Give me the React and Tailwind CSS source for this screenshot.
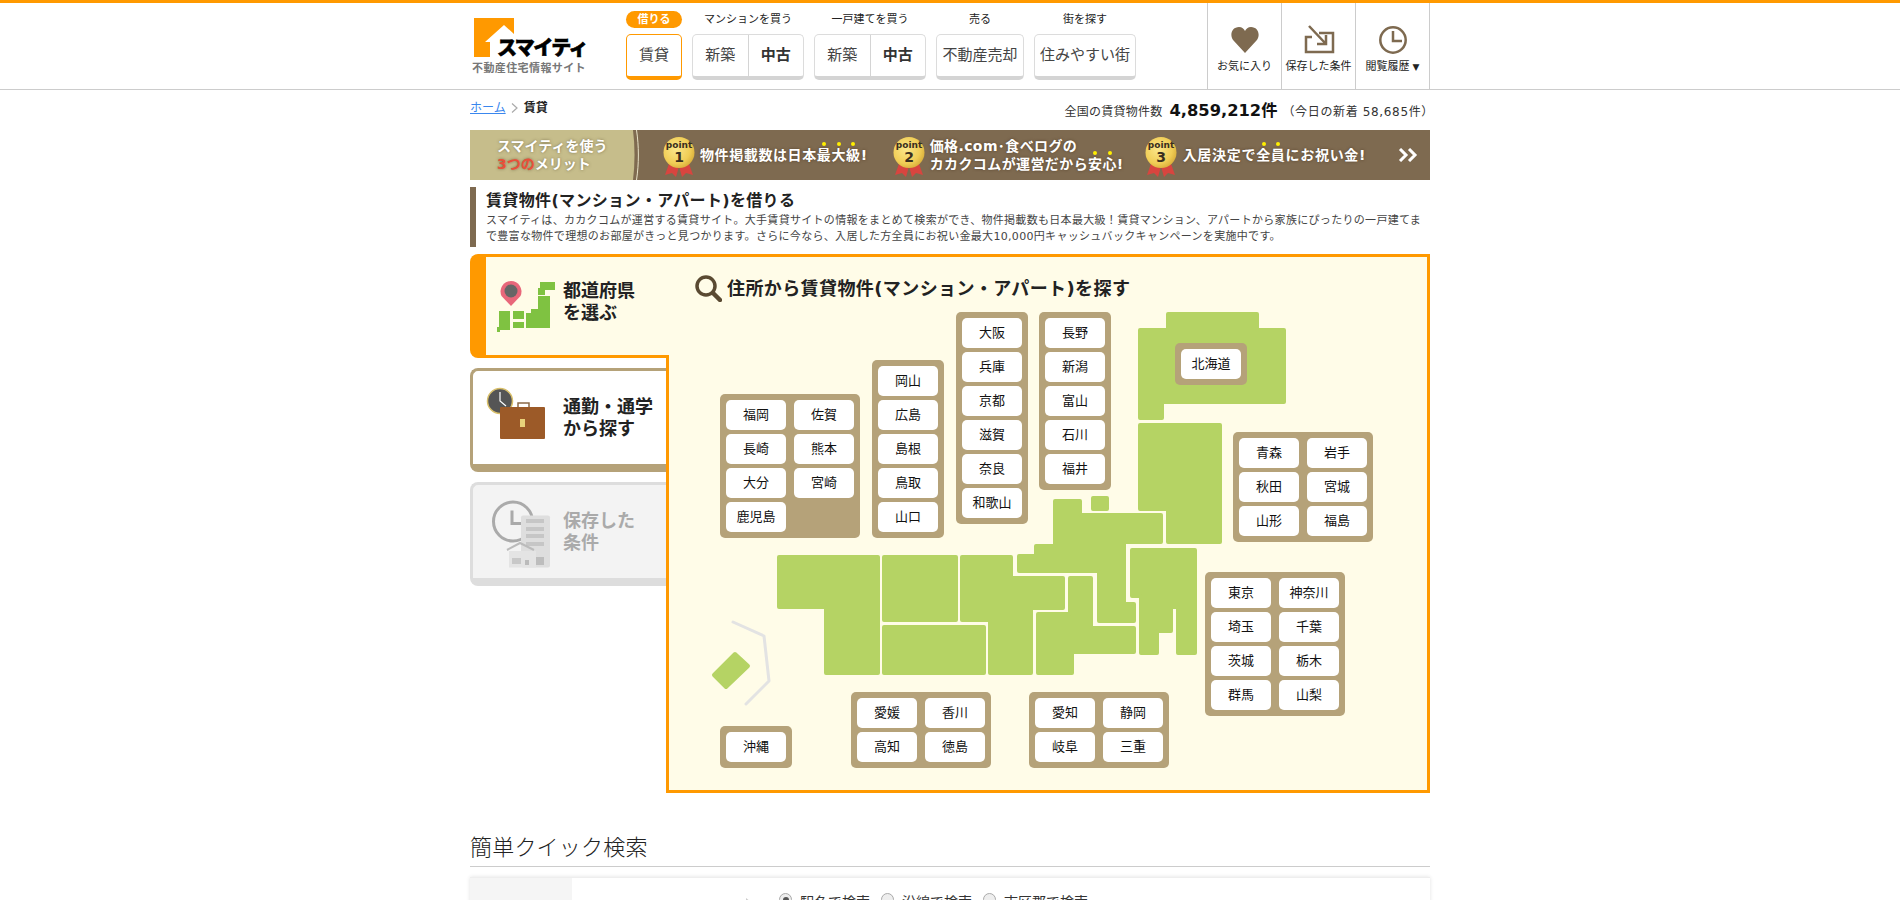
import React from "react";

function inset(pts, r = 2) {
  const n = pts.length;
  return pts
    .map((p, i) => {
      const a = pts[(i + n - 1) % n];
      const b = pts[(i + 1) % n];
      const d1 = [Math.sign(p[0] - a[0]), Math.sign(p[1] - a[1])];
      const d2 = [Math.sign(b[0] - p[0]), Math.sign(b[1] - p[1])];
      return `${p[0] + r * (-d1[1] - d2[1])},${p[1] + r * (d1[0] + d2[0])}`;
    })
    .join(" ");
}

const SHAPES = [
  [[1166,312],[1259,312],[1259,328],[1286,328],[1286,404],[1164,404],[1164,420],[1138,420],[1138,328],[1166,328]],
  [[1138,423],[1222,423],[1222,544],[1166,544],[1166,511],[1138,511]],
  [[1091,496],[1109,496],[1109,511],[1091,511]],
  [[1053,499],[1082,499],[1082,513],[1163,513],[1163,544],[1126,544],[1126,602],[1136,602],[1136,623],[1097,623],[1097,573],[1017,573],[1017,554],[1034,554],[1034,544],[1053,544]],
  [[1130,548],[1197,548],[1197,655],[1176,655],[1176,609],[1173,609],[1173,633],[1159,633],[1159,655],[1139,655],[1139,598],[1130,598]],
  [[1036,612],[1068,612],[1068,576],[1093,576],[1093,626],[1136,626],[1136,654],[1074,654],[1074,675],[1036,675]],
  [[960,555],[1013,555],[1013,576],[1065,576],[1065,610],[1033,610],[1033,675],[988,675],[988,622],[960,622]],
  [[882,555],[958,555],[958,622],[882,622]],
  [[882,625],[986,625],[986,675],[882,675]],
  [[777,555],[880,555],[880,675],[824,675],[824,609],[777,609]],
];

const GROUPS = [
  { pos: "left-[51px] top-[137px]", cols: "grid-cols-[60px_60px]", items: ["福岡","佐賀","長崎","熊本","大分","宮崎","鹿児島"] },
  { pos: "left-[203px] top-[103px]", cols: "grid-cols-[60px]", items: ["岡山","広島","島根","鳥取","山口"] },
  { pos: "left-[287px] top-[55px]", cols: "grid-cols-[60px]", items: ["大阪","兵庫","京都","滋賀","奈良","和歌山"] },
  { pos: "left-[370px] top-[55px]", cols: "grid-cols-[60px]", items: ["長野","新潟","富山","石川","福井"] },
  { pos: "left-[506px] top-[86px]", cols: "grid-cols-[60px]", items: ["北海道"] },
  { pos: "left-[564px] top-[175px]", cols: "grid-cols-[60px_60px]", items: ["青森","岩手","秋田","宮城","山形","福島"] },
  { pos: "left-[536px] top-[315px]", cols: "grid-cols-[60px_60px]", items: ["東京","神奈川","埼玉","千葉","茨城","栃木","群馬","山梨"] },
  { pos: "left-[51px] top-[469px]", cols: "grid-cols-[60px]", items: ["沖縄"] },
  { pos: "left-[182px] top-[435px]", cols: "grid-cols-[60px_60px]", items: ["愛媛","香川","高知","徳島"] },
  { pos: "left-[360px] top-[435px]", cols: "grid-cols-[60px_60px]", items: ["愛知","静岡","岐阜","三重"] },
];

function Logo() {
  return (
    <div className="w-[156px] shrink-0 relative h-full">
      <svg width="40" height="40" viewBox="0 0 40 40" className="absolute left-[4px] top-[15px]">
        <path d="M0 0H40V16L30 7L11 24H16V39H0Z" fill="#ff9900" />
      </svg>
      <span className="absolute left-[27px] top-[31px] text-[20px] leading-[28px] font-black text-black tracking-[-1.6px] whitespace-nowrap [-webkit-text-stroke:0.6px_#000]">スマイティ</span>
      <span className="absolute left-[2px] top-[59px] text-[11px] leading-[14px] tracking-[0.4px] font-bold text-[#777] whitespace-nowrap">不動産住宅情報サイト</span>
    </div>
  );
}

function NavBtn({ children, w, active }) {
  return (
    <div className={`flex items-center justify-center h-[46px] ${w} bg-white rounded-[5px] border border-b-[4px] text-[15px] ${active ? "border-[#ff9900] text-[#444]" : "border-[#dcdcdc] border-b-[#d4d4d4] text-[#444]"}`}>
      {children}
    </div>
  );
}

function NavSplit() {
  return (
    <div className="flex h-[46px] w-[112px] bg-white rounded-[5px] border border-[#dcdcdc] border-b-[4px] border-b-[#d4d4d4] text-[15px] text-[#444]">
      <span className="flex-1 flex items-center justify-center border-r border-[#d4d4d4]">新築</span>
      <span className="flex-1 flex items-center justify-center font-bold text-[#333]">中古</span>
    </div>
  );
}

function NavCol({ label, pill, children }) {
  return (
    <div className="flex flex-col items-center pt-[8px]">
      {pill ? (
        <span className="h-[17px] w-[56px] rounded-full bg-[#ff9900] text-white text-[11px] leading-[17px] font-bold text-center">{label}</span>
      ) : (
        <span className="h-[17px] text-[11px] leading-[17px] text-[#222] whitespace-nowrap">{label}</span>
      )}
      <div className="mt-[6px]">{children}</div>
    </div>
  );
}

function IconCell({ children, label, last }) {
  return (
    <div className={`flex flex-col items-center border-l border-[#ccc] ${last ? "border-r w-[75px]" : "w-[74px]"}`}>
      <div className="h-[30px] mt-[22px] flex items-center justify-center">{children}</div>
      <span className="mt-[4px] text-[11px] leading-[16px] text-[#222] whitespace-nowrap">{label}</span>
    </div>
  );
}

function Header() {
  return (
    <header className="h-[90px] border-t-[3px] border-b border-t-[#ff9900] border-b-[#ccc]">
      <div className="w-[960px] mx-auto flex h-full">
        <Logo />
        <div className="flex gap-[10px]">
          <NavCol label="借りる" pill><NavBtn w="w-[56px]" active>賃貸</NavBtn></NavCol>
          <NavCol label="マンションを買う"><NavSplit /></NavCol>
          <NavCol label="一戸建てを買う"><NavSplit /></NavCol>
          <NavCol label="売る"><NavBtn w="w-[88px]">不動産売却</NavBtn></NavCol>
          <NavCol label="街を探す"><NavBtn w="w-[102px]">住みやすい街</NavBtn></NavCol>
        </div>
        <div className="ml-auto flex">
          <IconCell label="お気に入り">
            <svg width="28" height="26" viewBox="0 0 28 26"><path d="M14 26 L2.5 13.5 C-2 8 1 0 8 0 C11 0 13 2 14 4 C15 2 17 0 20 0 C27 0 30 8 25.5 13.5 Z" fill="#7e6a50" /></svg>
          </IconCell>
          <IconCell label="保存した条件">
            <svg width="32" height="30" viewBox="0 0 32 30" fill="none" stroke="#7e6a50" strokeWidth="2.5">
              <path d="M9 12H3V27H30V8H16" />
              <path d="M6 1L23 19M23 10V19H14" />
            </svg>
          </IconCell>
          <IconCell label={<span>閲覧履歴<span className="text-[9px] ml-[3px]">▼</span></span>} last>
            <svg width="30" height="30" viewBox="0 0 30 30" fill="none" stroke="#7e6a50" strokeWidth="2.5">
              <circle cx="15" cy="15" r="12.7" />
              <path d="M15 6V16H24" />
            </svg>
          </IconCell>
        </div>
      </div>
    </header>
  );
}

function Medal({ n }) {
  const id = `gold${n}`;
  return (
    <svg width="32" height="40" viewBox="0 0 32 40" className="shrink-0 block">
      <defs>
        <radialGradient id={id} cx="40%" cy="40%" r="65%">
          <stop offset="0" stopColor="#fbe68a" />
          <stop offset="0.7" stopColor="#f0cd55" />
          <stop offset="1" stopColor="#d9ae3a" />
        </radialGradient>
      </defs>
      <path d="M7 24L2 38L9 36L13 40L17 26Z" fill="#d8453f" />
      <path d="M25 24L30 38L23 36L19 40L15 26Z" fill="#d8453f" />
      <circle cx="16" cy="15.5" r="15.5" fill={`url(#${id})`} />
      <text x="16" y="11" textAnchor="middle" fontSize="9" fill="#3a2f1e" fontFamily="DejaVu Sans">point</text>
      <text x="16" y="25" textAnchor="middle" fontSize="14" fontWeight="bold" fill="#3a2f1e" fontFamily="DejaVu Sans">{n}</text>
    </svg>
  );
}

function Dotted({ children }) {
  return (
    <span className="relative">
      {children}
      <span className="absolute left-1/2 -ml-[2px] -top-[5px] w-[4px] h-[4px] rounded-full bg-[#ffef00]" />
    </span>
  );
}

function Banner() {
  const shadow = "[text-shadow:0_0_3px_rgba(60,40,20,0.6)]";
  return (
    <div className="h-[50px] flex items-center bg-[#7e6a50] text-white font-bold">
      <div className="w-[162px] h-full bg-[#c6bd8b] pl-[27px] pt-[7px] text-[14px] leading-[18px] [text-shadow:0_0_3px_rgba(90,80,50,0.7)]">
        <div>スマイティを使う</div>
        <div><span className="text-[#e8503a]">3つの</span>メリット</div>
      </div>
      <svg width="12" height="50" viewBox="0 0 12 50" className="shrink-0">
        <path d="M0 0H1C3 16 3 34 1 50H0Z" fill="#c6bd8b" />
        <path d="M4.5 0C7 16 7 34 4.5 50" fill="none" stroke="#e9e3c8" strokeWidth="1" />
      </svg>
      <div className="ml-[19px] mt-[4px]"><Medal n={1} /></div>
      <div className={`ml-[5px] text-[14px] tracking-[0.6px] whitespace-nowrap ${shadow}`}>
        物件掲載数は日本<Dotted>最</Dotted><Dotted>大</Dotted><Dotted>級</Dotted>!
      </div>
      <div className="ml-[25px] mt-[4px]"><Medal n={2} /></div>
      <div className={`ml-[5px] text-[14px] leading-[18px] tracking-[0.4px] whitespace-nowrap ${shadow}`}>
        <div>価格.com･食べログの</div>
        <div>カカクコムが運営だから<Dotted>安</Dotted><Dotted>心</Dotted>!</div>
      </div>
      <div className="ml-[21px] mt-[4px]"><Medal n={3} /></div>
      <div className={`ml-[6px] text-[14px] tracking-[0.7px] whitespace-nowrap ${shadow}`}>
        入居決定で<Dotted>全</Dotted><Dotted>員</Dotted>にお祝い金!
      </div>
      <svg width="20" height="14" viewBox="0 0 20 14" fill="none" stroke="#fff" strokeWidth="3" className="ml-auto mr-[12px]">
        <path d="M2 1L8 7L2 13M11 1L17 7L11 13" />
      </svg>
    </div>
  );
}

function Group({ g }) {
  return (
    <div className={`absolute ${g.pos} grid ${g.cols} gap-x-2 gap-y-1 p-1.5 rounded-[5px] bg-[#b5a279]`}>
      {g.items.map((t) => (
        <span key={t} className="h-[30px] rounded-[5px] bg-white flex items-center justify-center text-[13px] text-[#111]">{t}</span>
      ))}
    </div>
  );
}

function MapPanel() {
  return (
    <section className="relative flex-1 h-[539px] border-[3px] border-[#ff9900] bg-[#fffce8]">
      <svg width="758" height="533" viewBox="669 257 758 533" className="absolute left-0 top-0">
        {SHAPES.map((s, i) => (
          <polygon key={i} points={inset(s)} fill="#b5d364" stroke="#b5d364" strokeWidth="4" strokeLinejoin="round" />
        ))}
        <polygon points="735,654 748,666 726,687 714,675" fill="#b5d364" stroke="#b5d364" strokeWidth="4" strokeLinejoin="round" />
        <polyline points="733,622 764,636 769,681 746,704" fill="none" stroke="#e3e3e3" strokeWidth="3" strokeLinejoin="round" strokeLinecap="round" />
      </svg>
      <div className="relative flex items-center gap-[5px] pl-[26px] pt-[18px] text-[18px] leading-[26px] font-bold text-[#222]">
        <svg width="27" height="27" viewBox="0 0 27 27" fill="none" stroke="#5a4a32">
          <circle cx="11" cy="11" r="9" strokeWidth="3.5" />
          <path d="M18 18L25 25" strokeWidth="4.5" strokeLinecap="round" />
        </svg>
        <h2 className="tracking-[0.4px]">住所から賃貸物件(マンション・アパート)を探す</h2>
      </div>
      {GROUPS.map((g) => <Group key={g.pos} g={g} />)}
    </section>
  );
}

function Tabs() {
  return (
    <div className="w-[196px] shrink-0">
      <div className="relative z-10 w-[199px] h-[104px] flex items-center pl-[10px] pb-[8px] rounded-l-[8px] border-[3px] border-l-[16px] border-r-0 border-[#ff9900] bg-[#fffce8]">
        <svg width="60" height="54" viewBox="0 0 60 54" className="shrink-0 mr-[7px] mt-[10px]">
          <g fill="#7fc241">
            <polygon points="44,2 59,2 59,10 49,10 49,15 42,15 42,8 44,8" />
            <polygon points="42,16 54,16 54,48 30,48 30,33 35,33 35,29 42,29" />
            <rect x="17" y="31" width="11" height="8" />
            <rect x="17" y="42" width="11" height="6" />
            <rect x="3" y="31" width="11" height="19" />
            <rect x="1" y="47" width="3" height="5" />
          </g>
          <path d="M15 26L5.5 16A10.5 10.5 0 1 1 24.5 16Z" fill="#e8677a" />
          <circle cx="15" cy="11" r="6.5" fill="#666" />
        </svg>
        <div className="text-[18px] leading-[22px] font-bold text-[#222]">都道府県<br />を選ぶ</div>
      </div>
      <div className="mt-[10px] w-[200px] h-[104px] flex items-center pl-[12px] rounded-l-[8px] border-[3px] border-b-[8px] border-r-0 border-[#b5a279] bg-white">
        <svg width="62" height="54" viewBox="0 0 62 54" className="shrink-0 mr-[16px] mb-[8px]">
          <circle cx="15" cy="14" r="12.5" fill="#555" stroke="#d8bf6a" strokeWidth="1.5" />
          <path d="M15 5V14L21 19" stroke="#fff" strokeWidth="1.2" fill="none" />
          <path d="M33 20V16H44V20" stroke="#8a6a48" strokeWidth="1.5" fill="none" />
          <rect x="15" y="20" width="45" height="32" rx="1" fill="#9c5a28" />
          <rect x="35" y="32" width="5" height="8" fill="#e8d27a" />
        </svg>
        <div className="text-[18px] leading-[22px] font-bold text-[#222] whitespace-nowrap">通勤・通学<br />から探す</div>
      </div>
      <div className="mt-[10px] w-[200px] h-[104px] flex items-center pl-[17px] rounded-l-[8px] border-[3px] border-b-[8px] border-r-0 border-[#dddddd] bg-[#f3f3f3]">
        <svg width="64" height="72" viewBox="0 0 64 72" className="shrink-0 mr-[9px]">
          <circle cx="23" cy="25.5" r="19.5" fill="none" stroke="#aaa" strokeWidth="3" />
          <path d="M22 14.5V27.5H32" fill="none" stroke="#aaa" strokeWidth="3" />
          <rect x="31" y="19.5" width="29" height="52" rx="2" fill="#dedede" />
          <g fill="#c6c6c6">
            <rect x="36" y="23" width="18" height="4" /><rect x="36" y="31" width="18" height="4" /><rect x="36" y="38" width="18" height="4" /><rect x="36" y="46" width="18" height="4" />
          </g>
          <rect x="19" y="55" width="27" height="16.5" fill="#e4e4e4" />
          <path d="M17 54L30 47L44 54" fill="none" stroke="#bbb" strokeWidth="2" />
          <rect x="22" y="62" width="9" height="6" fill="#c8c8c8" />
          <rect x="35" y="64" width="4" height="5" fill="#bbb" />
          <rect x="46" y="61" width="8" height="8" fill="#bdbdbd" />
        </svg>
        <div className="text-[18px] leading-[22px] font-bold text-[#aaa]">保存した<br />条件</div>
      </div>
    </div>
  );
}

function Radio({ on, label }) {
  return (
    <span className="flex items-start gap-[8px] text-[14px] leading-[16px] text-[#333]">
      <span className="w-[13px] h-[13px] rounded-full border border-[#aaa] bg-[#eee] flex items-center justify-center shrink-0">
        {on && <span className="w-[6px] h-[6px] rounded-full bg-[#555]" />}
      </span>
      <span className="mt-[1px] whitespace-nowrap">{label}</span>
    </span>
  );
}

export default function App() {
  return (
    <div className="h-[900px] overflow-hidden bg-white text-[#333] font-['DejaVu_Sans','Noto_Sans_CJK_JP',sans-serif]">
      <Header />
      <main className="w-[960px] mx-auto">
        <div className="h-[40px] flex justify-between">
          <nav className="flex items-center h-[36px] text-[12px] text-[#222]">
            <a className="text-[#3a87ee] underline">ホーム</a>
            <svg width="8" height="10" viewBox="0 0 8 10" fill="none" stroke="#aaa" strokeWidth="1.2" className="mx-[5px]"><path d="M1 0.5L6 5L1 9.5" /></svg>
            <b>賃貸</b>
          </nav>
          <p className="flex items-baseline h-[40px] pt-[9px] -mr-[4px] text-[12px] leading-[24px] text-[#333] whitespace-nowrap">
            <span className="tracking-[0.25px]">全国の賃貸物件数</span>
            <b className="ml-[7px] text-[16.3px] text-[#111]">4,859,212件</b>
            <span className="ml-[5px] tracking-[0.65px]">（今日の新着 58,685件）</span>
          </p>
        </div>
        <Banner />
        <div className="mt-[7px] h-[60px] border-l-[6px] border-[#7e6a50] pl-[10px]">
          <h1 className="h-[26px] text-[16px] leading-[28px] tracking-[0.35px] font-bold text-[#222]">賃貸物件(マンション・アパート)を借りる</h1>
          <p className="text-[11px] leading-[16px] tracking-[0.31px] text-[#444] whitespace-nowrap">
            スマイティは、カカクコムが運営する賃貸サイト。大手賃貸サイトの情報をまとめて検索ができ、物件掲載数も日本最大級！賃貸マンション、アパートから家族にぴったりの一戸建てま<br />で豊富な物件で理想のお部屋がきっと見つかります。さらに今なら、入居した方全員にお祝い金最大10,000円キャッシュバックキャンペーンを実施中です。
          </p>
        </div>
        <div className="mt-[7px] flex">
          <Tabs />
          <MapPanel />
        </div>
        <h2 className="mt-[40px] h-[34px] border-b border-[#ccc] text-[22px] leading-[30px] tracking-[0.2px] font-light text-[#222]">簡単クイック検索</h2>
        <div className="mt-[10px] flex h-[100px] border-t border-[#eee] shadow-[0_0_4px_rgba(0,0,0,0.12)]">
          <div className="w-[102px] bg-[#f5f5f5]" />
          <div className="relative flex-1 flex items-start gap-[11px] pl-[207px] pt-[15px]">
            <span className="absolute left-[174px] top-[20px] border-y-[4px] border-y-transparent border-l-[5px] border-l-[#ccc]" />
            <Radio on label="駅名で検索" />
            <Radio label="沿線で検索" />
            <Radio label="市区郡で検索" />
          </div>
        </div>
      </main>
    </div>
  );
}
